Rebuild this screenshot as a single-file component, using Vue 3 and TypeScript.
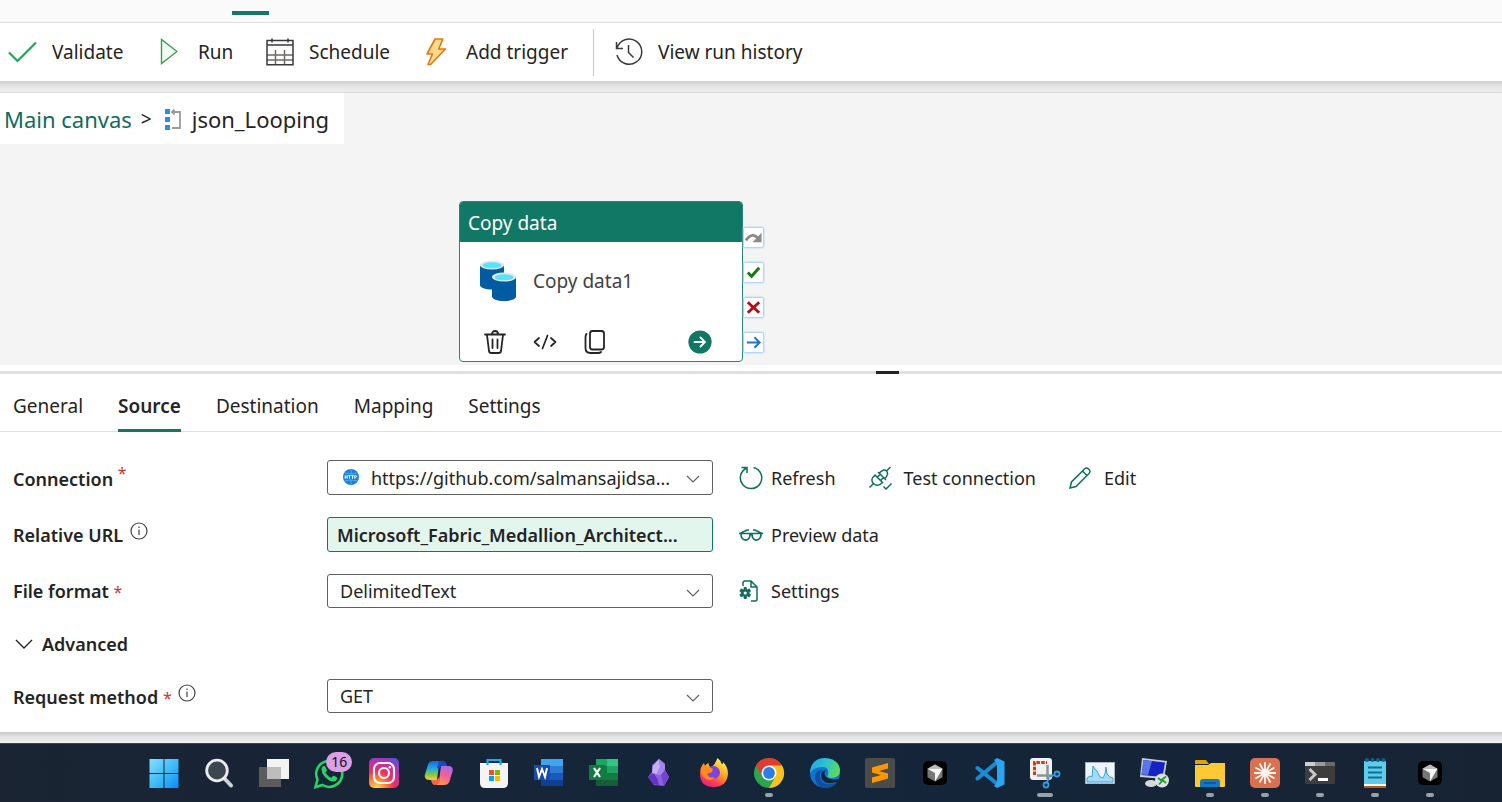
<script setup lang="ts">
import { ref } from 'vue'

const tabs = ['General', 'Source', 'Destination', 'Mapping', 'Settings']
const activeTab = ref('Source')
const relativeUrl = ref('Microsoft_Fabric_Medallion_Architect...')
const advancedOpen = ref(true)
</script>

<template>
  <div class="page">
    <div class="ribbon"><span class="ribbon-mark"></span></div>

    <header class="toolbar">
      <button type="button" class="tool validate">
        <svg width="30" height="30" viewBox="0 0 30 30" fill="none" stroke="#1fa856" stroke-width="2.2"><path d="M2 15.500 10.500 24 29 5.500" /></svg>
        <span>Validate</span>
      </button>
      <button type="button" class="tool run">
        <svg width="20" height="30" viewBox="0 0 20 30" fill="#f2faf3" stroke="#3c9b50" stroke-width="1.400"><path d="M3.500 2.500v24L19 14.500z" /></svg>
        <span>Run</span>
      </button>
      <button type="button" class="tool schedule">
        <svg width="28" height="30" viewBox="0 0 28 30" fill="none" stroke="#3b3a39" stroke-width="1.500">
          <path d="M9.500 13v14M18.500 13v14M1 18h26M1 23h26" stroke="#6e6866" />
          <path d="M1 3.500h26v24.200H1zM1 8h26M6 1.500v4M22 1.500v4" />
        </svg>
        <span>Schedule</span>
      </button>
      <button type="button" class="tool trigger">
        <svg width="22" height="30" viewBox="0 0 22 30" fill="#fbdb8b" stroke="#e27717" stroke-width="1.600" stroke-linejoin="round"><path d="M10 2h7.700l-4 10H20.500L5.500 27.500H3L7.500 17H2z" /></svg>
        <span>Add trigger</span>
      </button>
      <span class="divider"></span>
      <button type="button" class="tool history">
        <svg width="28" height="30" viewBox="0 0 28 30" fill="none" stroke="#3b3a39" stroke-width="1.500"><path d="M1.500 5v6.500H8M2 11.300A12.600 12.600 0 1 1 2 18M13.500 8v7.500l5 5" /></svg>
        <span>View run history</span>
      </button>
    </header>

    <div class="seam"></div>

    <main class="canvas">
      <nav class="crumbs">
        <a href="#">Main canvas</a>
        <span class="sep">&gt;</span>
        <svg width="16" height="22" viewBox="0 0 16 22">
          <path d="M0 1h5v5H0zM0 9h5v5H0zM0 17h5v5H0z" fill="#2b8fe0" />
          <path d="M7 4h8v16H7M9.500 1.500 7 4l2.500 2.500" fill="none" stroke="#9b9b9b" stroke-width="1.800" />
        </svg>
        <span>json_Looping</span>
      </nav>

      <section class="node">
        <h2>Copy data</h2>
        <div class="node-body">
          <svg width="38" height="42" viewBox="0 0 38 42">
            <path d="M1 5v20c0 2.500 5 4.500 12 4.500S25 27.500 25 25V5z" fill="#005ba1" />
            <ellipse cx="13" cy="5" rx="12" ry="4.500" fill="#e8e8e8" /><ellipse cx="13" cy="5.300" rx="9.500" ry="3" fill="#50e6ff" />
            <path d="M13 17v19.500c0 2.500 5 4.500 12 4.500s12-2 12-4.500V17z" fill="#005ba1" />
            <ellipse cx="25" cy="17" rx="12" ry="4.500" fill="#e8e8e8" /><ellipse cx="25" cy="17.300" rx="9.500" ry="3" fill="#50e6ff" />
          </svg>
          <span>Copy data1</span>
        </div>
        <div class="node-actions">
          <button type="button" aria-label="Delete"><svg width="24" height="26" viewBox="0 0 24 26" fill="none" stroke="#252525" stroke-width="1.800" stroke-linecap="round"><path d="M2 5.500h20M9 5a3 3 0 0 1 6 0M4 6l2 16q.3 2 2.300 2h7.400q2 0 2.300-2l2-16M9.500 10.500v8.500M14.500 10.500v8.500" /></svg></button>
          <button type="button" aria-label="View code"><svg width="24" height="26" viewBox="0 0 24 26" fill="none" stroke="#252525" stroke-width="1.700" stroke-linecap="round" stroke-linejoin="round"><path d="M6 9 1.500 13 6 17M18 9l4.500 4-4.500 4M14.500 6.500l-5 13" /></svg></button>
          <button type="button" aria-label="Duplicate"><svg width="24" height="26" viewBox="0 0 24 26" fill="none" stroke="#252525" stroke-width="1.800" stroke-linecap="round"><rect x="7" y="2" width="14" height="18.500" rx="2.500" /><path d="M3.500 5Q2.500 6 2.500 8v11q0 5 5 5H15q2 0 3-1" /></svg></button>
          <button type="button" aria-label="Open" class="go"><svg width="24" height="26" viewBox="0 0 24 26" fill="none"><circle cx="12" cy="13" r="11.600" fill="#117865" /><path d="M6.500 13h10.500M12.500 8.500 17 13l-4.500 4.500" stroke="#fff" stroke-width="1.800" stroke-linecap="round" /></svg></button>
        </div>
      </section>

      <div class="ports">
        <span><svg viewBox="0 0 20 20"><path d="M2 13Q9 3 16 12" fill="none" stroke="#8a8a8a" stroke-width="3" /><path d="M18.500 5v10H9z" fill="#8a8a8a" /></svg></span>
        <span><svg viewBox="0 0 20 20" fill="none" stroke="#107c10" stroke-width="3"><path d="m4 10 4 4 8-9" /></svg></span>
        <span><svg viewBox="0 0 20 20" fill="none" stroke="#b40a14" stroke-width="3"><path d="m4 4.500 12 11M16 4.500l-12 11" /></svg></span>
        <span><svg viewBox="0 0 20 20" fill="none" stroke="#1b75d0" stroke-width="2"><path d="M3 10h13M11 4.500 16.500 10 11 15.500" /></svg></span>
      </div>
    </main>

    <div class="splitter"><span></span></div>

    <section class="panel">
      <div class="tabs" role="tablist">
        <button v-for="tab in tabs" :key="tab" type="button" role="tab" :aria-selected="tab === activeTab" :class="{ active: tab === activeTab }" @click="activeTab = tab">{{ tab }}</button>
      </div>

      <form class="form" @submit.prevent>
        <div class="row">
          <label for="connection">Connection <sup>*</sup></label>
          <div class="field with-icon">
            <svg class="http" width="16" height="16" viewBox="0 0 16 16">
              <circle cx="8" cy="8" r="8" fill="#1683dc" />
              <path d="M2 4q6 2.500 12 0M2 12q6-2.500 12 0M8 0v16" fill="none" stroke="#7bbcf0" stroke-width=".7" />
              <rect x="1" y="5.500" width="14" height="5" fill="#1683dc" />
              <path d="M2.200 6.200v3.600M4.200 6.200v3.600M2.200 8h2M5.200 6.600h2.600M6.500 6.600v3.200M8.300 6.600h2.500M9.500 6.600v3.200M11.700 9.800V6.600h1q1 0 1 .9t-1 .9h-1" fill="none" stroke="#fff" stroke-width=".9" />
            </svg>
            <select id="connection"><option>https://github.com/salmansajidsa...</option></select>
            <svg class="chev" width="14" height="8" viewBox="0 0 14 8"><path d="m1 1 6 6 6-6" /></svg>
          </div>
          <div class="actions">
            <button type="button">
              <svg width="24" height="24" viewBox="0 0 24 24"><path d="M8 1v6M8.500 1.500H2.500M8 2A10.700 10.700 0 1 0 14.500 1.500" /></svg>Refresh
            </button>
            <button type="button" class="roomy">
              <svg width="24" height="24" viewBox="0 0 24 24"><path d="m1.500 21.500 4-4M18.500 5l4-4M5.500 17.500C3 15 3.500 12 7 9l7.500 7.500c-3.500 3.500-6.500 3.500-9 1zM10 6l8 8M11 7.500c3-3.500 5.500-4.500 7.500-2.500s1 5-2 8M9 11.500l3-3M12.500 14.500l3-3M15.500 20.500l2.500 2.500 5.500-5.500" /></svg>Test connection
            </button>
            <button type="button" class="roomy">
              <svg width="24" height="24" viewBox="0 0 24 24"><path d="M2 22 3.500 16 16.500 3Q18.500 1 20.800 3.200T21 7.500L8 20.500zM14.500 5l4.500 4.500" /></svg>Edit
            </button>
          </div>
        </div>

        <div class="row">
          <label for="relative-url">Relative URL <svg class="info" width="18" height="18" viewBox="0 0 18 18"><circle cx="9" cy="9" r="8" /><path d="M9 7.500V13M9 4.500V6" /></svg></label>
          <div class="field"><input id="relative-url" v-model="relativeUrl" type="text" /></div>
          <div class="actions">
            <button type="button">
              <svg width="24" height="24" viewBox="0 0 24 24"><path stroke-width="1.700" d="M0 10.500h24M2 11c0 8 9 8 9 .5M13 11.500c0 7.500 9 7.500 9-.5M11 12q1-1 2 0M1 10.500 8 7h2M23 10.500 16 7h-2" /></svg>Preview data
            </button>
          </div>
        </div>

        <div class="row">
          <label for="file-format">File format <b class="req">*</b></label>
          <div class="field">
            <select id="file-format" class="compact"><option>DelimitedText</option></select>
            <svg class="chev" width="14" height="8" viewBox="0 0 14 8"><path d="m1 1 6 6 6-6" /></svg>
          </div>
          <div class="actions">
            <button type="button">
              <svg width="24" height="24" viewBox="0 0 24 24"><path d="M4 7V4q0-2 2-2h6l6 6v12q0 2-2 2h-4M12 2v6h6" /><path fill="#0f6f5c" stroke="none" d="M5 8h2.500l.5 2.500 2.600-.9 1.400 2.400-1.800 1.900 1.800 1.900-1.400 2.400-2.600-.9-.5 2.700H5l-.6-2.700-2.500.9-1.500-2.400 1.900-1.900-1.900-1.900 1.500-2.400 2.500.9z" /><circle cx="6.200" cy="14" r="1.600" fill="#fff" stroke="none" /></svg>Settings
            </button>
          </div>
        </div>

        <button type="button" class="advanced" :aria-expanded="advancedOpen" @click="advancedOpen = !advancedOpen">
          <svg width="18" height="10" viewBox="0 0 18 10" fill="none" stroke="#242424" stroke-width="1.400"><path d="m1 1 8 8 8-8" /></svg>
          Advanced
        </button>

        <div v-if="advancedOpen" class="row">
          <label for="method">Request method <b class="req">*</b> <svg class="info" width="18" height="18" viewBox="0 0 18 18"><circle cx="9" cy="9" r="8" /><path d="M9 7.500V13M9 4.500V6" /></svg></label>
          <div class="field">
            <select id="method" class="compact"><option>GET</option></select>
            <svg class="chev" width="14" height="8" viewBox="0 0 14 8"><path d="m1 1 6 6 6-6" /></svg>
          </div>
        </div>
      </form>
    </section>

    <div class="edge"></div>

    <footer class="taskbar">
      <button type="button" aria-label="Start"><svg viewBox="0 0 30 30"><defs><linearGradient id="win" x1="0" y1="0" x2="30" y2="30" gradientUnits="userSpaceOnUse"><stop stop-color="#8be0fc" /><stop offset=".5" stop-color="#41bef8" /><stop offset="1" stop-color="#0a8cf5" /></linearGradient></defs><path fill="url(#win)" d="M.500 1h14v14H.500zM15.500 1h14v14h-14zM.500 16h14v14H.500zM15.500 16h14v14h-14z" /></svg></button>
      <button type="button" aria-label="Search"><svg viewBox="0 0 30 30"><path d="m20 20 7 7.500" stroke="#cfd3d7" stroke-width="4" stroke-linecap="round" /><circle cx="13" cy="12.500" r="10.300" fill="#3c4652" stroke="#e9ebec" stroke-width="2.800" /></svg></button>
      <button type="button" aria-label="Task view"><svg viewBox="0 0 30 30"><path fill="#5c5c5c" d="M0 9h22v20H0z" /><path fill="#f3f3f3" d="M8 1h22v20H8z" /><path fill="#bdbdbd" d="M8 9h14v12H8z" /></svg></button>
      <button type="button" aria-label="WhatsApp"><svg viewBox="0 0 30 30"><path d="m1.500 29 2-7.500A13 13 0 1 1 8.500 27z" fill="none" stroke="#25d366" stroke-width="2.600" /><path d="M7.500 10q1-2.500 3-2 .8 0 1.300 1.500l1 2.500q.3.800-1.300 2.500 2 4 6 5.200 1.500-2.200 2.300-1.900l3 1.500q.8.500.4 1.500-1 3-4 2.800-4-.3-8-4.400T7.500 10z" fill="#25d366" /></svg><span class="badge">16</span></button>
      <button type="button" aria-label="Instagram"><svg viewBox="0 0 30 30"><defs><radialGradient id="ig" cx=".25" cy="1" r="1.150"><stop stop-color="#ffd95a" /><stop offset=".25" stop-color="#fd8a35" /><stop offset=".5" stop-color="#f22d5e" /><stop offset=".75" stop-color="#c02fa8" /><stop offset="1" stop-color="#5a4fd5" /></radialGradient></defs><rect width="30" height="30" rx="5" fill="url(#ig)" /><g fill="none" stroke="#fff" stroke-width="2.100"><rect x="5" y="5" width="20" height="20" rx="6" /><circle cx="15" cy="15" r="5" /></g><circle cx="20.800" cy="9.200" r="1.300" fill="#fff" /></svg></button>
      <button type="button" aria-label="Copilot"><svg viewBox="0 0 30 30"><defs><linearGradient id="cp1" x1="0" y1="0" x2="0" y2="1"><stop stop-color="#1b64d8" /><stop offset=".4" stop-color="#22a9e0" /><stop offset=".7" stop-color="#7fc64a" /><stop offset="1" stop-color="#f5d22c" /></linearGradient><linearGradient id="cp2" x1=".7" y1="0" x2=".3" y2="1"><stop stop-color="#a96be8" /><stop offset=".5" stop-color="#f0609a" /><stop offset="1" stop-color="#ff9a48" /></linearGradient></defs><path fill="url(#cp2)" d="M17 8h7q6 0 4.500 5.500l-3 10Q24 27 20 27h-9q3 0 4-4z" /><path fill="url(#cp1)" d="M13 22H6q-6.500 0-5-5.500l3-10Q5.500 3 9 3h10q-3 0-4 4z" /><path fill="#194bc0" d="M15 3h4q3 0 4 5h-5q-2 0-3 3l-2-1z" /><path fill="#f9644d" d="M7 22h4q3 0 4-3l1 2-1 4q-1 2-4 2-3 0-4-5z" /></svg></button>
      <button type="button" aria-label="Store"><svg viewBox="0 0 30 30"><path d="M8.500 8V2h13v6" fill="none" stroke="#20a8e8" stroke-width="2.200" /><path d="M1 5h28v20q0 5-5 5H6q-5 0-5-5z" fill="#f4f4f4" /><path fill="#20a8e8" d="M7.400 5h2.200v2H7.400zM20.400 5h2.200v2h-2.200z" /><path fill="#f25022" d="M10 12h5v5h-5z" /><path fill="#7fba00" d="M16 12h5v5h-5z" /><path fill="#00a4ef" d="M10 18h5v5h-5z" /><path fill="#ffb900" d="M16 18h5v5h-5z" /></svg></button>
      <button type="button" aria-label="Word"><svg viewBox="0 0 30 30"><path fill="#41a5ee" d="M7 1h22v7H7z" /><path fill="#2b7cd3" d="M7 8h22v7H7z" /><path fill="#185abd" d="M7 15h22v7H7z" /><path fill="#103f91" d="M7 22h22v6H7z" /><path fill="#174ca8" d="M0 7h16v15H0z" /><path d="m3 10 2 9 3-8 3 8 2-9" fill="none" stroke="#fff" stroke-width="1.900" /></svg></button>
      <button type="button" aria-label="Excel"><svg viewBox="0 0 30 30"><path fill="#21a366" d="M7 1h11v7H7z" /><path fill="#33c481" d="M18 1h11v7H18z" /><path fill="#107c41" d="M7 8h11v14H7z" /><path fill="#21a366" d="M18 8h11v7H18z" /><path fill="#107c41" d="M18 15h11v7H18z" /><path fill="#185c37" d="M7 22h22v6H7z" /><path fill="#107c41" d="M0 7h16v15H0z" /><path d="m5 10 6 9M11 10l-6 9" fill="none" stroke="#fff" stroke-width="2.200" /></svg></button>
      <button type="button" aria-label="Obsidian"><svg viewBox="0 0 30 30"><path fill="#8a64dc" d="m15 1 6 5v6l4 7-5 9-10-1-6-8 4-5V7z" /><path fill="#c6aef5" d="m15 1-6 7-1 7 5 1 3-7z" /><path fill="#6534c5" d="m4 19 5-4 4 5 2 7-6-1z" /><path fill="#a483ea" d="m15 1 6 5v6l-4 5-4 0 3-8z" /><path fill="#7446cf" d="m17 17 4-5 4 7-5 9z" /></svg></button>
      <button type="button" aria-label="Firefox"><svg viewBox="0 0 30 30"><defs><linearGradient id="ff" x1=".8" y1=".1" x2=".3" y2="1"><stop stop-color="#fff04a" /><stop offset=".45" stop-color="#ff9a22" /><stop offset=".75" stop-color="#ff4050" /><stop offset="1" stop-color="#e81f80" /></linearGradient></defs><path fill="url(#ff)" d="M18.500 0q3.500 2.500 4 6 2 0 1.500-2 5 5 5 11.500Q28 29 14.500 29T1 15.500Q1 9 5 5l1 3q1-2 3.500-3 0 3 2 4 4-1 7-9z" /><circle cx="14.500" cy="14.500" r="6.500" fill="#7c45dd" /><path fill="#ff8b20" d="M2 10q6-3 12 1l-1 3-5 2q2 5 8 3-3 5-9 2T2 10z" /></svg></button>
      <button type="button" aria-label="Chrome" class="open"><svg viewBox="0 0 30 30"><circle cx="15" cy="15" r="15" fill="#2da44e" /><path fill="#e33b2e" d="M2 7.500A15 15 0 0 1 28 7.500H15a7.500 7.500 0 0 0-6.500 11.200z" /><path fill="#fcc21b" d="M15 7.500h13A15 15 0 0 1 15 30l6.500-11.200z" /><circle cx="15" cy="15" r="7.500" fill="#fff" /><circle cx="15" cy="15" r="5.900" fill="#2b7de9" /></svg></button>
      <button type="button" aria-label="Edge"><svg viewBox="0 0 30 30"><defs><linearGradient id="ed" x1="0" y1=".3" x2="1" y2=".6"><stop stop-color="#20a8e6" /><stop offset=".5" stop-color="#2fc4c8" /><stop offset="1" stop-color="#62dc54" /></linearGradient></defs><circle cx="15" cy="15" r="15" fill="#0f73d0" /><path fill="#0e4f9f" d="M12 12q-4 5-.5 11 5 6 16 1-5 7-13 6Q6 29 5 20q0-8 7-8z" /><path fill="#14253a" d="M16 12q-3 3 0 7 5 4 14 1.500v3L27.500 24Q12 28 11 18q0-5 5-6z" /><path fill="url(#ed)" d="M0 13Q2 0 15 0q14 1 15 12 0 8-9 8-5-.5-3-3 2-8-6-8Q4 9 0 15z" /></svg></button>
      <button type="button" aria-label="Sublime Text"><svg viewBox="0 0 30 30"><rect width="30" height="30" rx="2" fill="#4b4b4b" /><path fill="#ff9800" d="M7 9.500 23 5v5.500L14 13l9 2.500v5L7 25v-5.500l9-2.500-9-2.500z" /></svg></button>
      <button type="button" aria-label="Cursor"><svg viewBox="0 0 30 30"><rect x="3" y="3" width="24" height="24" rx="5" fill="#000" /><path fill="#777" d="m15 6.500 7.500 4.300v8.400L15 23.500l-7.500-4.300v-8.400z" /><path fill="#bbb" d="m15 6.500 7.500 4.300h-15z" /><path fill="#f4f4f4" d="M7.500 10.800h15L15 23.500V15z" /></svg></button>
      <button type="button" aria-label="Visual Studio Code"><svg viewBox="0 0 30 30"><path d="m2.500 10 18 14.500M2.500 20.500l18-15" stroke="#178cd4" stroke-width="4" stroke-linecap="round" /><path fill="#2aa5f2" d="m22 0 7.500 3.500v23L22 30l-3-2 3-4V6l-3-4z" /></svg></button>
      <button type="button" aria-label="Snipping Tool" class="open wide"><svg viewBox="0 0 30 30"><rect width="22" height="22" rx="3" fill="#f2f2f2" /><path d="M4.500 17V4.500H17" fill="none" stroke="#d83b01" stroke-width="3" stroke-dasharray="3.500 1.300" /><path d="M17.500 7v14M7 17.500h16" stroke="#8b9299" stroke-width="2.500" /><g fill="none" stroke="#2ba0e0" stroke-width="1.800"><circle cx="27" cy="16" r="2.500" /><circle cx="16" cy="27" r="2.500" /><path d="m24.500 17-5 2M17 24.500l2-5" /></g></svg></button>
      <button type="button" aria-label="Resource Monitor"><svg viewBox="0 0 30 30"><path d="M.500 4.500h29v21H.500z" fill="#eef4f9" stroke="#aeb5bb" /><path fill="#a5daf6" stroke="#3b9fe0" d="M2 24v-4l3-2 2 1 1-11 2 3 2 2 3 6 3 1 2-4 1-7 1 7 3 3 3 1v4z" /></svg></button>
      <button type="button" aria-label="Remote Desktop"><svg viewBox="0 0 30 30"><ellipse cx="11" cy="25.500" rx="6" ry="3.500" fill="#d5d8db" /><path fill="#c9cdd2" d="m2 0 25 3-3 18-24-2z" /><path fill="#1522c4" d="m3.500 2 21.500 2.500-2.500 14.500-21-2z" /><path fill="#5b76ea" d="M3.500 2 12 3 8 17l-6.500-.5z" /><circle cx="22" cy="22.500" r="7" fill="#dfe2e3" /><path d="m18 20 4 3-3 3.500M26 18.500l-4 3 4 3.500" fill="none" stroke="#249c35" stroke-width="1.900" /></svg></button>
      <button type="button" aria-label="File Explorer" class="open"><svg viewBox="0 0 30 30"><path fill="#e0a008" d="M0 3q0-1 1-1h10l3 4H0z" /><path fill="#fdc934" d="M0 7h13l3-2h14v23q0 1-1 1H1q-1 0-1-1z" /><path fill="#1278cb" d="M5 29v-5q0-3 3-3h14q3 0 3 3v5z" /><path d="M9 25h12" stroke="#07508f" stroke-width="1.500" /></svg></button>
      <button type="button" aria-label="Claude" class="open"><svg viewBox="0 0 30 30"><rect width="30" height="30" rx="5" fill="#d9704f" /><path d="M15 4v22M4 15h22M9.500 5.500l11 19M20.500 5.500l-11 19M5.500 9.500l19 11M24.500 9.500l-19 11" stroke="#fff5ee" stroke-width="1.800" /></svg></button>
      <button type="button" aria-label="Terminal" class="open"><svg viewBox="0 0 30 30"><rect y="4" width="30" height="22" rx="1.500" fill="#3d3d3d" /><path fill="#cfcfcf" d="M0 4h10v4H0z" /><path fill="#9a9a9a" d="M10 4h10v4H10z" /><path fill="#6a6a6a" d="M20 4h10v4H20z" /><path d="m4.500 11 5.500 5.500L4.500 22" fill="none" stroke="#c9c9c9" stroke-width="3" /><path fill="#fff" d="M13 20h10v3H13z" /></svg></button>
      <button type="button" aria-label="Notepad" class="open"><svg viewBox="0 0 30 30"><path fill="#5fcbea" d="M4 3h22v23H4z" /><path fill="#fff" d="M4 26h22v2H4z" /><path fill="#b45a1c" d="M4 28h22v2H4z" /><path d="M8 9.500h14M8 14.500h14M8 19.500h14" stroke="#0f6d96" stroke-width="2" /><g fill="#0d6187"><circle cx="7" cy="2" r="2" /><circle cx="12.500" cy="2" r="2" /><circle cx="18" cy="2" r="2" /><circle cx="23.500" cy="2" r="2" /></g></svg></button>
      <button type="button" aria-label="Cursor window" class="open"><svg viewBox="0 0 30 30"><rect x="3" y="3" width="24" height="24" rx="5" fill="#000" /><path fill="#777" d="m15 6.500 7.500 4.300v8.400L15 23.500l-7.500-4.300v-8.400z" /><path fill="#bbb" d="m15 6.500 7.500 4.300h-15z" /><path fill="#f4f4f4" d="M7.500 10.800h15L15 23.500V15z" /></svg></button>
    </footer>
  </div>
</template>

<style>
body {
  margin: 0;
}
</style>

<style scoped>
.page {
  display: flex;
  flex-direction: column;
  min-height: 100vh;
  background: #fff;
  color: #242424;
  font-family: "Noto Sans", "Open Sans", sans-serif;
  font-size: 18px;
}
* {
  box-sizing: border-box;
}
svg {
  flex: none;
}
button {
  padding: 0;
  border: 0;
  background: none;
  color: inherit;
  font: inherit;
  white-space: nowrap;
}
.ribbon {
  height: 23px;
  padding: 11px 0 0 232px;
  background: #fafafa;
  border-bottom: 1px solid #dedede;
}
.ribbon-mark {
  display: block;
  width: 37px;
  height: 4px;
  background: #117865;
}
.toolbar {
  display: flex;
  align-items: center;
  height: 58px;
  padding-left: 7px;
  font-size: 19px;
}
.tool {
  display: flex;
  align-items: center;
}
.validate {
  gap: 15px;
  width: 151px;
}
.run {
  gap: 20px;
  width: 108px;
}
.schedule {
  gap: 15px;
  width: 159px;
}
.trigger {
  gap: 19px;
  width: 168px;
}
.history {
  gap: 15px;
  margin-left: 21px;
}
.divider {
  width: 1px;
  height: 47px;
  background: #c8c8c8;
}
.seam {
  height: 12px;
  background: linear-gradient(#cfcfcf, #e6e6e6 50%, #ededed);
  border-bottom: 1px solid #dcdcdc;
}
.canvas {
  position: relative;
  flex: 1;
  min-height: 272px;
  background: #f4f4f4;
}
.crumbs {
  display: inline-flex;
  align-items: center;
  height: 51px;
  padding: 0 15px 0 4px;
  background: #fff;
  font-size: 22px;
}
.crumbs a {
  color: #0f6c5c;
  text-decoration: none;
}
.crumbs svg {
  margin: 0 11px 0 13px;
}
.crumbs .sep {
  margin-left: 9px;
  font-size: 19px;
}
.node {
  position: absolute;
  left: 459px;
  top: 108px;
  width: 284px;
  height: 161px;
  overflow: hidden;
  border: 1px solid #2a8674;
  border-radius: 4px;
  background: #fff;
  font-size: 19px;
}
.node h2 {
  height: 40px;
  margin: 0;
  padding-left: 8px;
  background: #117865;
  color: #fff;
  font-size: 19px;
  font-weight: 400;
  line-height: 42px;
}
.node-body {
  display: flex;
  align-items: center;
  gap: 16px;
  height: 78px;
  padding-left: 19px;
  color: #424242;
}
.node-actions {
  display: flex;
  align-items: center;
  gap: 26px;
  padding: 9px 30px 0 23px;
}
.node-actions button {
  display: flex;
}
.go {
  margin-left: auto;
}
.ports {
  position: absolute;
  left: 744px;
  top: 135px;
  display: grid;
  gap: 16px;
}
.ports span {
  width: 19px;
  height: 19px;
  border-radius: 1px;
  background: #fff;
  box-shadow: 0 0 2px 1px #9cc9f0;
}
.ports svg {
  display: block;
}
.splitter {
  height: 9px;
  padding-top: 6px;
}
.splitter span {
  display: block;
  height: 3px;
  background: linear-gradient(#242424, #242424) 876px 0 / 23px 3px no-repeat #e0e0e0;
}
.tabs {
  display: flex;
  gap: 35px;
  height: 58px;
  padding-left: 13px;
  border-bottom: 1px solid #e0e0e0;
  font-size: 19px;
}
.tabs button {
  height: 58px;
  padding-top: 8px;
  border-bottom: 3px solid transparent;
}
.tabs .active {
  border-bottom-color: #117865;
  font-weight: 600;
}
.form {
  display: grid;
  gap: 22px;
  padding: 28px 0 19px 13px;
}
.row {
  display: grid;
  grid-template-columns: 288px 386px 1fr;
  column-gap: 26px;
  align-items: center;
}
label {
  white-space: nowrap;
  font-weight: 600;
  line-height: 24px;
}
label sup,
.req {
  color: #d13438;
  font-size: 16px;
  font-weight: 400;
  line-height: 1;
}
.info {
  margin-left: 2px;
  vertical-align: 2px;
  fill: none;
  stroke: #424242;
  stroke-width: 1.2;
}
.field {
  position: relative;
}
select,
input {
  appearance: none;
  display: block;
  width: 100%;
  height: 35px;
  padding: 0 40px 0 12px;
  border: 1px solid #616161;
  border-radius: 3px;
  background: #fff;
  color: #242424;
  font: inherit;
}
.compact {
  height: 34px;
}
input {
  padding: 0 9px;
  border-color: #117865;
  background: #e3f6ee;
  font-weight: 600;
}
.with-icon select {
  padding-left: 43px;
}
.http {
  position: absolute;
  left: 16px;
  top: 9px;
}
.chev {
  position: absolute;
  right: 13px;
  top: 15px;
  fill: none;
  stroke: #616161;
  stroke-width: 1.2;
}
.actions {
  display: flex;
  gap: 32px;
}
.actions button {
  display: flex;
  align-items: center;
  gap: 8px;
}
.actions .roomy {
  gap: 12px;
}
.actions svg {
  fill: none;
  stroke: #0f6f5c;
  stroke-width: 1.5;
}
.advanced {
  display: flex;
  align-items: center;
  justify-self: start;
  gap: 9px;
  height: 27px;
  padding-left: 2px;
  font-weight: 600;
}
.edge {
  height: 11px;
  background: linear-gradient(#c9c9c9, #e2e2e2 40%, #f0f0f0);
}
.taskbar {
  display: grid;
  grid-template-columns: repeat(24, 1fr);
  height: 59px;
  padding: 0 44px 0 136px;
  border-top: 1px solid #3d4650;
  background: linear-gradient(90deg, #1a2433, #14263b 55%, #172333);
}
.taskbar button {
  position: relative;
  display: grid;
  place-items: center;
}
.taskbar svg {
  width: 30px;
  height: 30px;
  overflow: visible;
}
.badge {
  position: absolute;
  left: 25px;
  top: 8px;
  width: 26px;
  height: 20px;
  border-radius: 10px;
  background: #dc9ee4;
  color: #111;
  font-size: 14px;
  line-height: 20px;
}
.open::after {
  content: "";
  position: absolute;
  bottom: 5px;
  width: 8px;
  height: 4px;
  border-radius: 2px;
  background: #98a0a9;
}
.open.wide::after {
  width: 16px;
}
</style>
